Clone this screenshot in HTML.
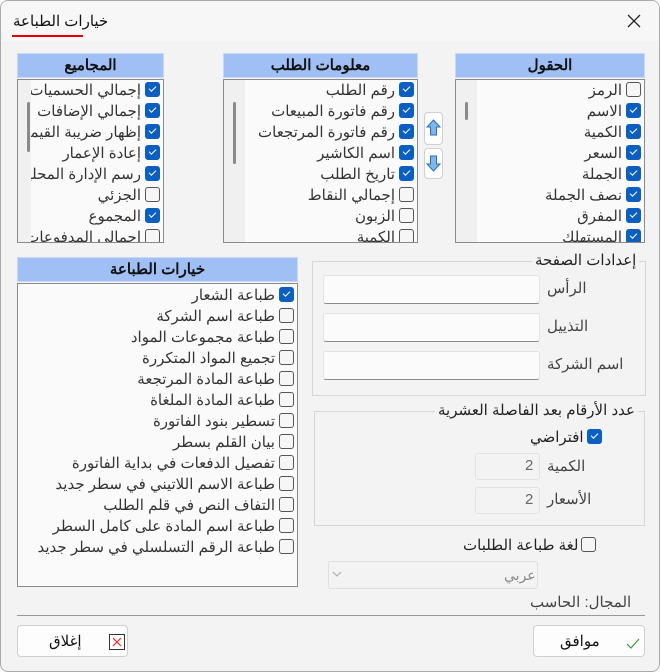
<!DOCTYPE html>
<html><head><meta charset="utf-8"><style>
*{box-sizing:border-box;margin:0;padding:0}
body{width:660px;height:672px;background:#fff;font-family:"Liberation Sans","Noto Sans CJK SC",sans-serif;font-size:15px;color:#222;overflow:hidden;position:relative}
.win{position:absolute;left:0;top:0;width:660px;height:672px;background:#f3f3f3;border:1px solid #aaa;border-radius:8px;overflow:hidden}
.tb{position:absolute;left:0;top:0;width:660px;height:40px;background:#f7f7f7}
.a{position:absolute}
.hdr{position:absolute;height:25px;background:#9fbff5;border:1px solid #c9d8f5;text-align:center;font-weight:bold;font-size:15px;line-height:23px;color:#111}
.lst{position:absolute;background:#fafafa;border:1px solid #8a8a8a;overflow:hidden;direction:rtl}
.sb{position:absolute;left:0;top:0;width:21px;height:100%;background:#f0f0f0;z-index:2}
.th{position:absolute;left:9px;width:3px;background:#8a8a8a;border-radius:2px}
.row{position:absolute;right:0;height:21px;line-height:20px;white-space:nowrap;font-size:15px;color:#333}
.cb{display:inline-block;width:15px;height:15px;border:1px solid #555;border-radius:3px;background:#f6f6f6;vertical-align:-2px;margin-left:4px;margin-right:3px;position:relative}
.cb.on{background:#0a5fc1;border-color:#0a5fc1}
.cb.on:after{content:"";position:absolute;left:3px;top:3px;width:6px;height:3px;border-left:1.3px solid #fff;border-bottom:1.3px solid #fff;transform:rotate(-45deg)}
.grp{position:absolute;border:1px solid #d6d6d6}
.lg{position:absolute;background:#f3f3f3;padding:0 3px;font-size:15px;white-space:nowrap}
.inp{position:absolute;background:#fbfbfb;border:1px solid #e3e3e3;border-bottom:1px solid #8a8a8a;border-radius:3px}
.lab{position:absolute;font-size:15px;color:#444;white-space:nowrap}
.btn{position:absolute;background:#fdfdfd;border:1px solid #d0d0d0;border-radius:4px}
</style></head><body>
<div class="win">
<div class="tb"></div>
<div class="a" style="left:12px;top:11px;font-size:15px;color:#111">خيارات الطباعة</div>
<div class="a" style="left:11px;top:34px;width:71px;height:2px;background:#e00"></div>
<svg class="a" style="left:625px;top:12px" width="16" height="16"><path d="M2 2L14 14M14 2L2 14" stroke="#222" stroke-width="1.3"/></svg>

<div class="hdr" style="left:454px;top:52px;width:190px">الحقول</div>
<div class="lst" style="left:454px;top:78px;width:190px;height:164px">
<div class="sb"><div class="th" style="top:22px;height:18px"></div></div>
<div class="row" style="top:1px"><span class="cb"></span>الرمز</div>
<div class="row" style="top:22px"><span class="cb on"></span>الاسم</div>
<div class="row" style="top:43px"><span class="cb on"></span>الكمية</div>
<div class="row" style="top:64px"><span class="cb on"></span>السعر</div>
<div class="row" style="top:85px"><span class="cb on"></span>الجملة</div>
<div class="row" style="top:106px"><span class="cb on"></span>نصف الجملة</div>
<div class="row" style="top:127px"><span class="cb on"></span>المفرق</div>
<div class="row" style="top:148px"><span class="cb on"></span>المستهلك</div>
</div>
<div class="btn" style="left:423px;top:111px;width:19px;height:33px"></div>
<div class="btn" style="left:423px;top:147px;width:19px;height:31px"></div>
<svg class="a" style="left:424px;top:118px" width="17" height="18"><path d="M8.5 1L15 8H11.5V16H5.5V8H2Z" fill="#7fb6ea" stroke="#2a6fb5"/></svg>
<svg class="a" style="left:424px;top:153px" width="17" height="18"><path d="M8.5 17L15 10H11.5V2H5.5V10H2Z" fill="#7fb6ea" stroke="#2a6fb5"/></svg>

<div class="hdr" style="left:222px;top:52px;width:195px">معلومات الطلب</div>
<div class="lst" style="left:222px;top:78px;width:195px;height:164px">
<div class="sb"><div class="th" style="top:22px;height:62px"></div></div>
<div class="row" style="top:1px"><span class="cb on"></span>رقم الطلب</div>
<div class="row" style="top:22px"><span class="cb on"></span>رقم فاتورة المبيعات</div>
<div class="row" style="top:43px"><span class="cb on"></span>رقم فاتورة المرتجعات</div>
<div class="row" style="top:64px"><span class="cb on"></span>اسم الكاشير</div>
<div class="row" style="top:85px"><span class="cb on"></span>تاريخ الطلب</div>
<div class="row" style="top:106px"><span class="cb"></span>إجمالي النقاط</div>
<div class="row" style="top:127px"><span class="cb"></span>الزبون</div>
<div class="row" style="top:148px"><span class="cb"></span>الكمية</div>
</div>

<div class="hdr" style="left:16px;top:52px;width:147px">المجاميع</div>
<div class="lst" style="left:16px;top:78px;width:147px;height:164px">
<div class="sb" style="width:13px"><div class="th" style="top:22px;height:50px"></div></div>
<div class="row" style="top:1px"><span class="cb on"></span>إجمالي الحسميات</div>
<div class="row" style="top:22px"><span class="cb on"></span>إجمالي الإضافات</div>
<div class="row" style="top:43px"><span class="cb on"></span>إظهار ضريبة القيمة المضافة</div>
<div class="row" style="top:64px"><span class="cb on"></span>إعادة الإعمار</div>
<div class="row" style="top:85px"><span class="cb on"></span>رسم الإدارة المحلية</div>
<div class="row" style="top:106px"><span class="cb"></span>الجزئي</div>
<div class="row" style="top:127px"><span class="cb on"></span>المجموع</div>
<div class="row" style="top:148px"><span class="cb"></span>إجمالي المدفوعات</div>
</div>

<div class="hdr" style="left:16px;top:256px;width:281px">خيارات الطباعة</div>
<div class="lst" style="left:16px;top:282px;width:281px;height:304px;background:#fafafa">
<div class="row" style="top:2px"><span class="cb on"></span>طباعة الشعار</div>
<div class="row" style="top:23px"><span class="cb"></span>طباعة اسم الشركة</div>
<div class="row" style="top:44px"><span class="cb"></span>طباعة مجموعات المواد</div>
<div class="row" style="top:65px"><span class="cb"></span>تجميع المواد المتكررة</div>
<div class="row" style="top:86px"><span class="cb"></span>طباعة المادة المرتجعة</div>
<div class="row" style="top:107px"><span class="cb"></span>طباعة المادة الملغاة</div>
<div class="row" style="top:128px"><span class="cb"></span>تسطير بنود الفاتورة</div>
<div class="row" style="top:149px"><span class="cb"></span>بيان القلم بسطر</div>
<div class="row" style="top:170px"><span class="cb"></span>تفصيل الدفعات في بداية الفاتورة</div>
<div class="row" style="top:191px"><span class="cb"></span>طباعة الاسم اللاتيني في سطر جديد</div>
<div class="row" style="top:212px"><span class="cb"></span>التفاف النص في قلم الطلب</div>
<div class="row" style="top:233px"><span class="cb"></span>طباعة اسم المادة على كامل السطر</div>
<div class="row" style="top:254px"><span class="cb"></span>طباعة الرقم التسلسلي في سطر جديد</div>
</div>

<div class="grp" style="left:311px;top:260px;width:334px;height:135px"></div>
<div class="lg" style="left:531px;top:250px">إعدادات الصفحة</div>
<div class="inp" style="left:322px;top:274px;width:217px;height:29px"></div>
<div class="inp" style="left:322px;top:312px;width:217px;height:29px"></div>
<div class="inp" style="left:322px;top:350px;width:217px;height:29px"></div>
<div class="lab" style="left:546px;top:278px">الرأس</div>
<div class="lab" style="left:546px;top:316px">التذييل</div>
<div class="lab" style="left:546px;top:354px">اسم الشركة</div>

<div class="grp" style="left:313px;top:410px;width:331px;height:115px"></div>
<div class="lg" style="left:434px;top:400px">عدد الأرقام بعد الفاصلة العشرية</div>
<div class="a" style="left:529px;top:427px;white-space:nowrap;direction:rtl"><span class="cb on" style="margin-left:3px"></span>افتراضي</div>
<div class="inp" style="left:474px;top:452px;width:65px;height:27px;border-bottom-color:#e3e3e3;background:#f3f3f3"></div>
<div class="inp" style="left:474px;top:486px;width:65px;height:27px;border-bottom-color:#e3e3e3;background:#f3f3f3"></div>
<div class="lab" style="left:524px;top:456px;color:#666">2</div>
<div class="lab" style="left:524px;top:490px;color:#666">2</div>
<div class="lab" style="left:546px;top:456px">الكمية</div>
<div class="lab" style="left:546px;top:489px">الأسعار</div>

<div class="a" style="left:462px;top:535px;white-space:nowrap;direction:rtl"><span class="cb" style="margin-left:3px"></span>لغة طباعة الطلبات</div>
<div class="a" style="left:327px;top:560px;width:210px;height:28px;border:1px solid #e0e0e0;border-radius:3px;background:#f3f3f3"></div>
<div class="lab" style="left:503px;top:566px;color:#888;font-size:14px">عربي</div>
<svg class="a" style="left:331px;top:570px" width="10" height="6"><path d="M1 1L5 5L9 1" fill="none" stroke="#aaa"/></svg>
<div class="lab" style="left:529px;top:592px">المجال: الحاسب</div>
<div class="a" style="left:16px;top:614px;width:628px;height:1px;background:#999"></div>

<div class="btn" style="left:532px;top:624px;width:112px;height:32px"></div>
<div class="lab" style="left:559px;top:631px;color:#111">موافق</div>
<svg class="a" style="left:625px;top:637px" width="14" height="11"><path d="M1 6L5 10L13 1" fill="none" stroke="#3a9a3a" stroke-width="1.2"/></svg>
<div class="btn" style="left:16px;top:624px;width:111px;height:32px"></div>
<div class="lab" style="left:48px;top:631px;color:#111">إغلاق</div>
<svg class="a" style="left:108px;top:633px" width="16" height="16"><rect x="0.5" y="0.5" width="15" height="15" fill="#fff" stroke="#333"/><path d="M4 4L12 12M12 4L4 12" stroke="#e22" stroke-width="1.2"/></svg>
</div>
</body></html>
